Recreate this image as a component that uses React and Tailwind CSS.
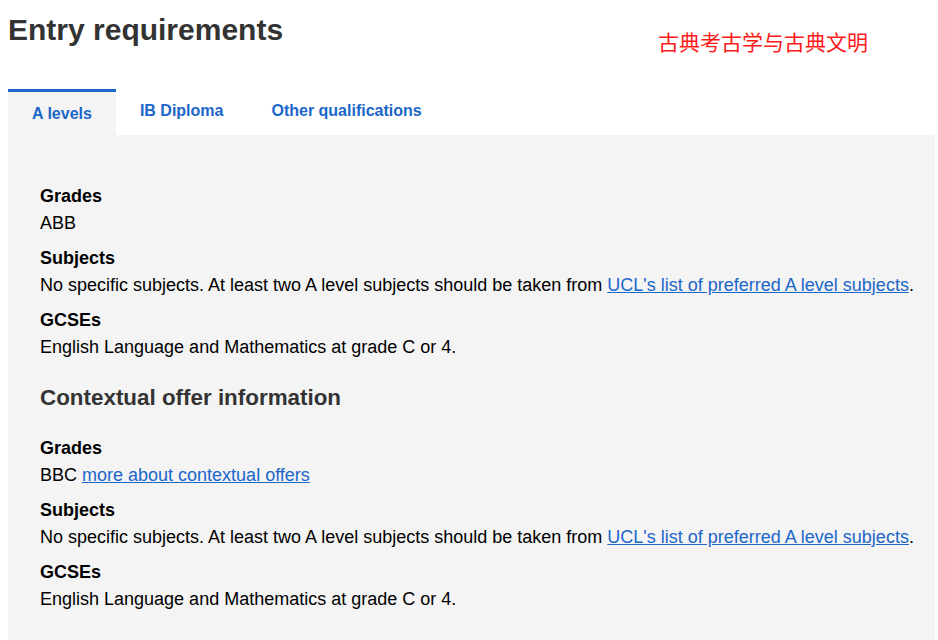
import React from 'react';

const font = { fontFamily: '"Liberation Sans", Arial, sans-serif' };

const aLevels = [
    { label: 'Grades', value: 'ABB' },
    { label: 'Subjects', value: 'subjects' },
    { label: 'GCSEs', value: 'English Language and Mathematics at grade C or 4.' },
];

const contextual = [
    { label: 'Grades', value: 'bbc' },
    { label: 'Subjects', value: 'subjects' },
    { label: 'GCSEs', value: 'English Language and Mathematics at grade C or 4.' },
];

function Value({ value }) {
    if (value === 'subjects') {
        return (
            <>
                No specific subjects. At least two A level subjects should be taken from{' '}
                <a href="#" className="text-[#1b66c9] underline">UCL's list of preferred A level subjects</a>.
            </>
        );
    }
    if (value === 'bbc') {
        return (
            <>
                BBC <a href="#" className="text-[#1b66c9] underline">more about contextual offers</a>
            </>
        );
    }
    return value;
}

function Requirements({ items }) {
    return (
        <div className="flex flex-col gap-[8px]">
            {items.map((item) => (
                <div key={item.label} className="text-[18px] leading-[27px] text-black">
                    <div className="font-bold">{item.label}</div>
                    <div><Value value={item.value} /></div>
                </div>
            ))}
        </div>
    );
}

export default function App() {
    const tabs = ['A levels', 'IB Diploma', 'Other qualifications'];

    return (
        <div className="min-h-screen bg-white pl-[8px]" style={font}>
            {/* Title row */}
            <div className="flex items-start w-[927px]">
                <h1 className="text-[30px] leading-[36px] font-bold text-[#333] mt-[12px]">Entry requirements</h1>
                <div
                    className="ml-auto mr-[67px] mt-[28px] text-[21px] leading-[26px] text-[#ff1a1a]"
                    style={{ fontFamily: '"Noto Sans CJK SC", sans-serif' }}
                >
                    古典考古学与古典文明
                </div>
            </div>

            {/* Tabs */}
            <div className="flex items-start mt-[35px] h-[46px]">
                {tabs.map((tab, i) => (
                    <div
                        key={tab}
                        className={
                            i === 0
                                ? "bg-[#f4f4f4] border-t-[3px] border-[#1b66c9] px-[24px] pt-[10px] pb-[9px] text-[16px] leading-[24px] font-bold text-[#1b66c9]"
                                : "px-[24px] pt-[10px] pb-[9px] text-[16px] leading-[24px] font-bold text-[#1b66c9]"
                        }
                    >
                        {tab}
                    </div>
                ))}
            </div>

            {/* Panel */}
            <div className="w-[927px] bg-[#f4f4f4] pt-[48px] pb-[40px] pl-[32px] pr-[12px]">
                <Requirements items={aLevels} />
                <h2 className="text-[22.4px] leading-[33px] font-bold text-[#333] mt-[20px] mb-[21px]">
                    Contextual offer information
                </h2>
                <Requirements items={contextual} />
            </div>
        </div>
    );
}
